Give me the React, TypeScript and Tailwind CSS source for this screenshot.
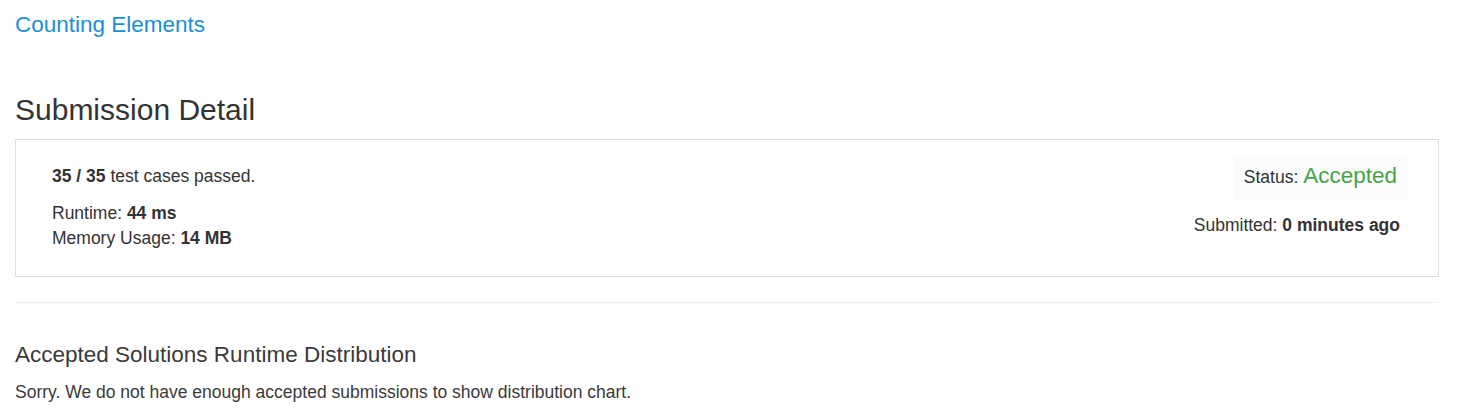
import { memo } from 'react';

const font = { fontFamily: '"Liberation Sans", Arial, sans-serif' };

const SubmissionSummary = memo(() => (
  <div className="mt-[13px] flex justify-between border border-[#dfdfdf] pl-[36px] pr-[31px]">
    <div className="pt-[24px] pb-[25px] text-[17.5px] leading-[25px]">
      <p>
        <b>35 / 35</b> test cases passed.
      </p>
      <p className="mt-[11.5px]">
        Runtime: <b>44 ms</b>
      </p>
      <p>
        Memory Usage: <b>14 MB</b>
      </p>
    </div>
    <div className="flex flex-col items-end pt-[14.5px]">
      <div className="bg-[#fcfcfc] px-[10px] pt-[8px] pb-[10px] text-[17.5px] leading-[26px]">
        Status:{' '}
        <span className="text-[22.5px] leading-[26px] text-[#46a34a]">
          Accepted
        </span>
      </div>
      <p className="mt-[13.5px] mr-[7px] text-[17.5px] leading-[25px]">
        Submitted: <b>0 minutes ago</b>
      </p>
    </div>
  </div>
));

SubmissionSummary.displayName = 'SubmissionSummary';

export default function App() {
  return (
    <div className="min-h-screen bg-white pl-[15px] pr-[21px] text-[#333]" style={font}>
      <a
        href="#"
        className="block pt-[12px] text-[22.5px] leading-[25px] text-[#1a8fd7]">
        Counting Elements
      </a>
      <h2 className="mt-[56px] text-[30px] leading-[33px] text-[#333]">
        Submission Detail
      </h2>
      <SubmissionSummary />
      <hr className="mt-[25px] border-0 border-t border-[#eee]" />
      <h3 className="mt-[39.4px] text-[22.5px] leading-[25px] text-[#3a3a3a]">
        Accepted Solutions Runtime Distribution
      </h3>
      <p className="mt-[13px] text-[17.5px] leading-[25px] text-[#3a3a3a]">
        Sorry. We do not have enough accepted submissions to show distribution
        chart.
      </p>
    </div>
  );
}
